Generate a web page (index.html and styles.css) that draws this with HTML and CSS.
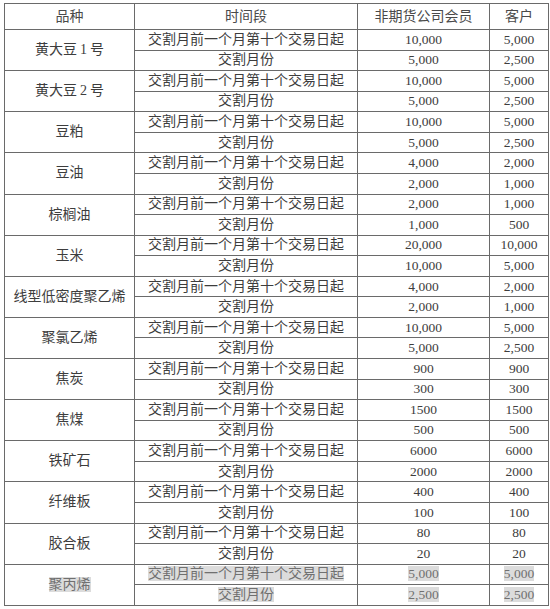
FILE: index.html
```html
<!DOCTYPE html>
<html lang="zh">
<head>
<meta charset="utf-8">
<link rel="stylesheet" href="styles.css">
</head>
<body>
<table class="limits">
  <colgroup>
    <col class="c1"><col class="c2"><col class="c3"><col class="c4">
  </colgroup>
  <thead>
    <tr class="head"><th>品种</th><th>时间段</th><th>非期货公司会员</th><th>客户</th></tr>
  </thead>
  <tbody>
    <tr><td rowspan="2" class="prod">黄大豆<span class="dg">1</span>号</td><td>交割月前一个月第十个交易日起</td><td class="num">10,000</td><td class="num">5,000</td></tr>
    <tr><td>交割月份</td><td class="num">5,000</td><td class="num">2,500</td></tr>
    <tr><td rowspan="2" class="prod">黄大豆<span class="dg">2</span>号</td><td>交割月前一个月第十个交易日起</td><td class="num">10,000</td><td class="num">5,000</td></tr>
    <tr><td>交割月份</td><td class="num">5,000</td><td class="num">2,500</td></tr>
    <tr><td rowspan="2" class="prod">豆粕</td><td>交割月前一个月第十个交易日起</td><td class="num">10,000</td><td class="num">5,000</td></tr>
    <tr><td>交割月份</td><td class="num">5,000</td><td class="num">2,500</td></tr>
    <tr><td rowspan="2" class="prod">豆油</td><td>交割月前一个月第十个交易日起</td><td class="num">4,000</td><td class="num">2,000</td></tr>
    <tr><td>交割月份</td><td class="num">2,000</td><td class="num">1,000</td></tr>
    <tr><td rowspan="2" class="prod">棕榈油</td><td>交割月前一个月第十个交易日起</td><td class="num">2,000</td><td class="num">1,000</td></tr>
    <tr><td>交割月份</td><td class="num">1,000</td><td class="num">500</td></tr>
    <tr><td rowspan="2" class="prod">玉米</td><td>交割月前一个月第十个交易日起</td><td class="num">20,000</td><td class="num">10,000</td></tr>
    <tr><td>交割月份</td><td class="num">10,000</td><td class="num">5,000</td></tr>
    <tr><td rowspan="2" class="prod">线型低密度聚乙烯</td><td>交割月前一个月第十个交易日起</td><td class="num">4,000</td><td class="num">2,000</td></tr>
    <tr><td>交割月份</td><td class="num">2,000</td><td class="num">1,000</td></tr>
    <tr><td rowspan="2" class="prod">聚氯乙烯</td><td>交割月前一个月第十个交易日起</td><td class="num">10,000</td><td class="num">5,000</td></tr>
    <tr><td>交割月份</td><td class="num">5,000</td><td class="num">2,500</td></tr>
    <tr><td rowspan="2" class="prod">焦炭</td><td>交割月前一个月第十个交易日起</td><td class="num">900</td><td class="num">900</td></tr>
    <tr><td>交割月份</td><td class="num">300</td><td class="num">300</td></tr>
    <tr><td rowspan="2" class="prod">焦煤</td><td>交割月前一个月第十个交易日起</td><td class="num">1500</td><td class="num">1500</td></tr>
    <tr><td>交割月份</td><td class="num">500</td><td class="num">500</td></tr>
    <tr><td rowspan="2" class="prod">铁矿石</td><td>交割月前一个月第十个交易日起</td><td class="num">6000</td><td class="num">6000</td></tr>
    <tr><td>交割月份</td><td class="num">2000</td><td class="num">2000</td></tr>
    <tr><td rowspan="2" class="prod">纤维板</td><td>交割月前一个月第十个交易日起</td><td class="num">400</td><td class="num">400</td></tr>
    <tr><td>交割月份</td><td class="num">100</td><td class="num">100</td></tr>
    <tr><td rowspan="2" class="prod">胶合板</td><td>交割月前一个月第十个交易日起</td><td class="num">80</td><td class="num">80</td></tr>
    <tr><td>交割月份</td><td class="num">20</td><td class="num">20</td></tr>
    <tr class="faded"><td rowspan="2" class="prod"><span class="hl">聚丙烯</span></td><td><span class="hl">交割月前一个月第十个交易日起</span></td><td class="num"><span class="hl">5,000</span></td><td class="num"><span class="hl">5,000</span></td></tr>
    <tr class="faded"><td><span class="hl">交割月份</span></td><td class="num"><span class="hl">2,500</span></td><td class="num"><span class="hl">2,500</span></td></tr>
  </tbody>
</table>
</body>
</html>
```

FILE: styles.css
```css
html, body {
  margin: 0;
  padding: 0;
  background: #ffffff;
}

body {
  padding: 3px 0 0 4px;
}

.limits {
  border-collapse: collapse;
  table-layout: fixed;
  width: 544px;
  font-family: "Liberation Serif", "Noto Sans CJK SC", serif;
  font-size: 14px;
  color: #3d3d3d;
}

.c1 { width: 130px; }
.c2 { width: 223px; }
.c3 { width: 132px; }
.c4 { width: 59px; }

.limits th,
.limits td {
  border: 1px solid #6a6a6a;
  padding: 0;
  text-align: center;
  vertical-align: middle;
  white-space: nowrap;
  overflow: hidden;
  line-height: 18px;
}

.limits th {
  font-weight: normal;
  height: 25px;
  color: #4a4a4a;
}

.limits td {
  height: 19.57px;
}

.dg {
  padding: 0 3px;
}

.num {
  font-size: 13.5px;
}

.faded td {
  color: #707070;
}

.hl {
  background: #dcdcdc;
}
```
